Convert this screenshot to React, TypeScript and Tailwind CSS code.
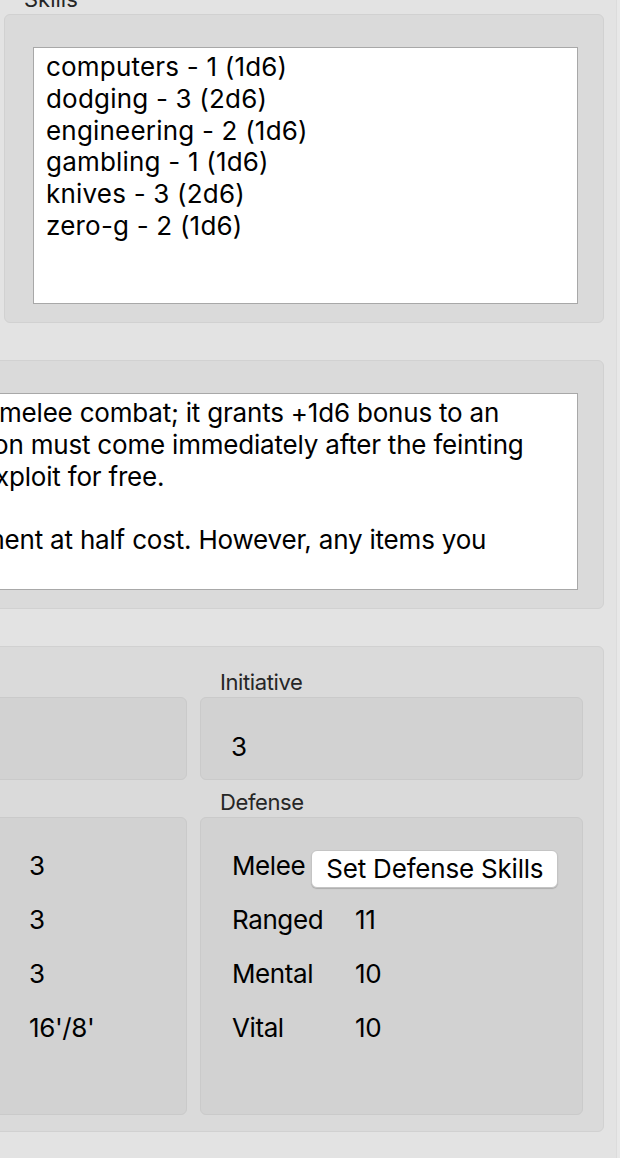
import React from "react";

const skills = [
  "computers - 1 (1d6)",
  "dodging - 3 (2d6)",
  "engineering - 2 (1d6)",
  "gambling - 1 (1d6)",
  "knives - 3 (2d6)",
  "zero-g - 2 (1d6)",
];

// only the right-hand part of the talents text is in view
const talentLines = [
  { text: "melee combat; it grants +1d6 bonus to an", shift: "ml-0" },
  { text: "on must come immediately after the feinting", shift: "-ml-[6px]" },
  { text: "xploit for free.", shift: "-ml-[4px]" },
  { text: "", shift: "ml-0" },
  { text: "ment at half cost. However, any items you", shift: "-ml-[17px]" },
];

const movement = [
  { label: "Shock", value: "3" },
  { label: "Wounds", value: "3" },
  { label: "Fatigue", value: "3" },
  { label: "Move", value: "16'/8'" },
];

const defense = [
  { label: "Ranged", value: "11" },
  { label: "Mental", value: "10" },
  { label: "Vital", value: "10" },
];

function GroupLabel({ children }: { children: React.ReactNode }) {
  return (
    <div className="h-[26px] mb-[2px] pl-[20px] text-[22px] leading-[26px] text-[#262626] whitespace-nowrap">
      {children}
    </div>
  );
}

function Group({
  label,
  className,
  children,
}: {
  label: string;
  className: string;
  children: React.ReactNode;
}) {
  return (
    <div>
      <GroupLabel>{label}</GroupLabel>
      <div className={"rounded-[6px] border border-[#d1d1d1] bg-[#dadada] " + className}>
        {children}
      </div>
    </div>
  );
}

function SubBox({ className, children }: { className: string; children?: React.ReactNode }) {
  return (
    <div className={"rounded-[6px] border border-[#cacaca] bg-[#d2d2d2] " + className}>
      {children}
    </div>
  );
}

export default function App() {
  return (
    <div className="flex w-[620px] h-[1158px] bg-[#e3e3e3] text-black font-['Inter','Liberation_Sans',sans-serif]">
      <div className="flex-1 min-w-0 overflow-hidden">
        <div className="-ml-[237px] -mt-[14px] w-[857px] px-[16px] flex flex-col gap-[9px]">
          <div className="grid grid-cols-[minmax(0,1fr)_600px] gap-x-[13px]">
            <Group label="Attributes" className="h-[309px]">
              <div />
            </Group>
            <Group label="Skills" className="pt-[32px] pr-[25px] pb-[18px] pl-[28px]">
              <div className="h-[257px] border border-[#a8a8a8] bg-white pt-[3px] pl-[12px] text-[26px] leading-[31.8px] tracking-[0.2px]">
                {skills.map((s) => (
                  <div key={s}>{s}</div>
                ))}
              </div>
            </Group>
          </div>

          <Group label="Talents" className="pt-[32px] pr-[25px] pb-[18px] pl-[28px]">
            <div className="h-[197px] overflow-hidden border border-[#a8a8a8] bg-white pt-[3px] pl-[190px] text-[26px] leading-[31.8px] tracking-[-0.2px]">
              {talentLines.map((l, i) => (
                <div key={i} className={"h-[31.8px] whitespace-nowrap " + l.shift}>
                  {l.text}
                </div>
              ))}
            </div>
          </Group>

          <Group label="" className="pt-[22px] pr-[20px] pb-[16px] pl-[20px]">
            <div className="grid grid-cols-[minmax(0,1fr)_383px] gap-x-[13px] gap-y-[9px] text-[26px] tracking-[-0.4px]">
              <div>
                <GroupLabel>Health</GroupLabel>
                <SubBox className="h-[83px]" />
              </div>
              <div>
                <GroupLabel>Initiative</GroupLabel>
                <SubBox className="h-[83px] pt-[33px] pl-[30px] leading-[32px]">3</SubBox>
              </div>
              <div>
                <GroupLabel>Condition</GroupLabel>
                <SubBox className="h-[298px] pt-[32px] pl-[31px] flex flex-col gap-[16px] leading-[32px]">
                  {movement.map((m) => (
                    <div key={m.label} className="h-[38px] flex items-start">
                      <span className="w-[197px]">{m.label}</span>
                      <span>{m.value}</span>
                    </div>
                  ))}
                </SubBox>
              </div>
              <div>
                <GroupLabel>Defense</GroupLabel>
                <SubBox className="h-[298px] pt-[32px] pl-[31px] flex flex-col gap-[16px] leading-[32px]">
                  <div className="h-[38px] flex items-start">
                    <span>Melee</span>
                    <button className="ml-[6px] h-[38px] rounded-[6px] border border-[#c4c4c4] bg-white px-[14px] text-[26px] leading-[36px] tracking-[-0.2px] shadow-[0_1px_1px_rgba(0,0,0,0.18)]">
                      Set Defense Skills
                    </button>
                  </div>
                  {defense.map((d) => (
                    <div key={d.label} className="h-[38px] flex items-start">
                      <span className="w-[123px]">{d.label}</span>
                      <span>{d.value}</span>
                    </div>
                  ))}
                </SubBox>
              </div>
            </div>
          </Group>
        </div>
      </div>
      <div className="w-[4px] border-l border-[#dcdcdc] bg-[#e8e8e8]" />
    </div>
  );
}
